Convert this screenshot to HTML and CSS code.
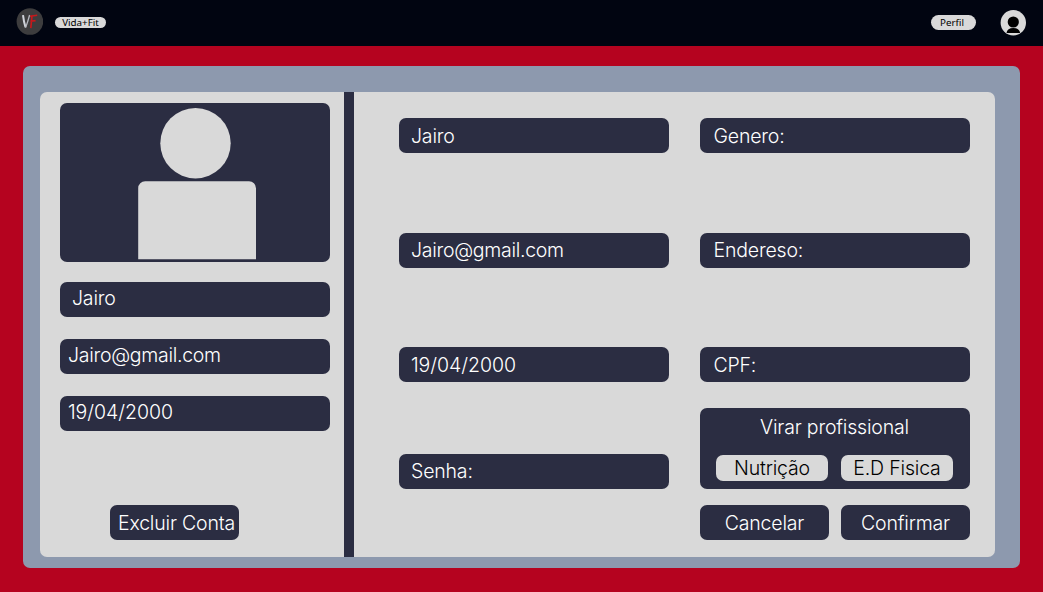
FILE: index.html
```html
<!DOCTYPE html>
<html lang="pt-BR">
<head>
<meta charset="utf-8">
<title>Vida+Fit</title>
<link rel="stylesheet" href="styles.css">
</head>
<body>
<header class="topbar">
  <svg class="logo" viewBox="0 0 27 27" aria-hidden="true">
    <circle cx="13.9" cy="13.5" r="13.3" fill="#3d3d3e"/>
    <path d="M7 7.200Q7.800 14 9.500 19.200" fill="none" stroke="#d0d3da" stroke-width="2"/>
    <path d="M9.500 19.800Q11.500 15 13.600 7" fill="none" stroke="#b4b7be" stroke-width="1.300"/>
    <path d="M16 7.900 14.800 20.200M14 8.300 21.200 7.300M14.300 13.200 19.600 12.600" fill="none" stroke="#c8181b" stroke-width="1.6"/>
  </svg>
  <span class="tag tag-brand">Vida+Fit</span>
  <a class="tag tag-profile">Perfil</a>
  <svg class="avatar" viewBox="0 0 26 26" aria-hidden="true">
    <circle cx="13.3" cy="12.7" r="12.7" fill="#d9d9d9"/>
    <circle cx="13.3" cy="12" r="5.6" fill="#000"/>
    <path d="M6.5 23Q7.3 18 13.3 18T20.100 23Z" fill="#000"/>
  </svg>
</header>
<main class="frame">
  <div class="panel">
    <aside class="summary">
      <svg class="photo" viewBox="0 0 270 159" aria-hidden="true">
        <circle cx="135.500" cy="40.2" r="35.2" fill="#d9d9d9"/>
        <path d="M78.200 156.2V85.2a7 7 0 0 1 7-7H189a7 7 0 0 1 7 7v71z" fill="#d9d9d9"/>
      </svg>
      <div class="field name">Jairo</div>
      <div class="field email">Jairo@gmail.com</div>
      <div class="field date">19/04/2000</div>
      <button class="button delete">Excluir Conta</button>
    </aside>
    <section class="form">
      <div class="column">
        <div class="field">Jairo</div>
        <div class="field email">Jairo@gmail.com</div>
        <div class="field date">19/04/2000</div>
        <div class="field">Senha:</div>
      </div>
      <div class="column labels">
        <div class="field">Genero:</div>
        <div class="field">Endereso:</div>
        <div class="field">CPF:</div>
        <div class="pro">
          <span>Virar profissional</span>
          <div class="choices">
            <button class="choice">Nutrição</button>
            <button class="choice">E.D Fisica</button>
          </div>
        </div>
        <div class="actions">
          <button class="button">Cancelar</button>
          <button class="button">Confirmar</button>
        </div>
      </div>
    </section>
  </div>
</main>
</body>
</html>
```
FILE: styles.css
```css
* { box-sizing: border-box; }

body {
  margin: 0;
  height: 592px;
  overflow: hidden;
  background: #b5031f;
  color: #fff;
  font: 350 19.5px/24px Inter, sans-serif;
  letter-spacing: -0.18px;
}

button {
  margin: 0;
  padding: 0;
  border: 0;
  font: inherit;
  letter-spacing: inherit;
  white-space: nowrap;
}

.topbar {
  display: flex;
  align-items: center;
  height: 46px;
  padding: 0 17px 0 16px;
  background: #010511;
}

.logo { width: 27px; height: 27px; margin-bottom: 3px; }
.avatar { width: 26px; height: 26px; margin-left: 24px; }

.tag {
  display: flex;
  align-items: center;
  justify-content: center;
  border-radius: 8px;
  background: #d9d9d9;
  color: #000;
  font: 400 9.8px/12px "Noto Sans", sans-serif;
  letter-spacing: 0;
}

.tag-brand { width: 51px; height: 11px; margin: 0 0 1px 12px; }
.tag-profile { width: 45px; height: 15px; margin: 0 0 1px auto; padding-right: 3px; }

.frame {
  width: 997px;
  height: 502px;
  margin: 20px 0 0 23px;
  padding: 26px 24px 11px 17px;
  border-radius: 7px;
  background: #8d99ae;
}

.panel {
  display: flex;
  width: 955px;
  height: 465px;
  overflow: hidden;
  border-radius: 7px;
  background: #d9d9d9;
}

.summary {
  display: flex;
  flex-direction: column;
  width: 314px;
  padding: 11px 14px 0 20px;
  border-right: 10px solid #2b2d42;
}

.photo {
  width: 270px;
  height: 159px;
  margin-bottom: 20px;
  border-radius: 7px;
  background: #2b2d42;
}

.field {
  flex: none;
  width: 270px;
  height: 35px;
  padding: 6px 12px 5px;
  border-radius: 7px;
  background: #2b2d42;
}

.email { letter-spacing: -0.28px; }
.date { letter-spacing: -0.05px; }

.summary .field { margin-bottom: 22px; padding: 4px 8px; }
.summary .name { padding-left: 12px; }

.button {
  height: 35px;
  border-radius: 7px;
  background: #2b2d42;
  color: #fff;
}

.delete { width: 129px; margin: 52px 0 0 50px; padding-left: 4px; }

.form { display: flex; gap: 31px; padding: 26px 0 0 45px; }
.column { display: flex; flex-direction: column; width: 270px; }
.form .field { margin-bottom: 79.5px; }
.form .field:nth-child(even) { padding-top: 5px; }
.form .field:nth-child(3) { margin-bottom: 72px; }
.labels .field { padding-left: 13.5px; }
.form .labels .field:nth-child(3) { margin-bottom: 26px; }

.pro {
  height: 81px;
  padding: 7px 17px 0 16px;
  border-radius: 7px;
  background: #2b2d42;
  text-align: center;
}

.choices { display: flex; justify-content: space-between; margin-top: 16px; }

.choice {
  width: 112px;
  height: 26px;
  border-radius: 7px;
  background: #d9d9d9;
  color: #000;
}

.actions { display: flex; justify-content: space-between; margin-top: 16px; }
.actions .button { width: 129px; }
```
